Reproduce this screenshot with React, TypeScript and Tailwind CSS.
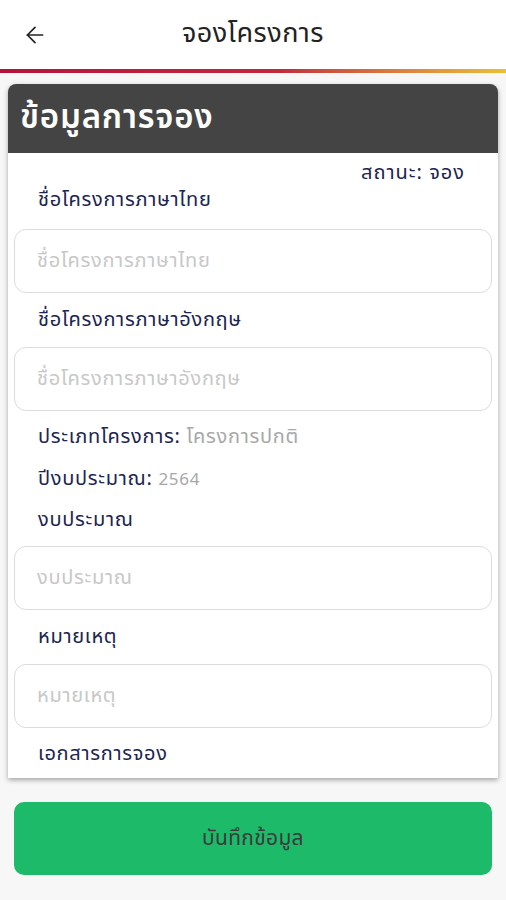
import { ArrowLeft } from "lucide-react"

const font = { fontFamily: '"Noto Sans Thai", "Noto Sans", sans-serif' }

function Label({ text, className = "" }: { text: string; className?: string }) {
  return <div className={"px-[30px] text-[20px] leading-[28px] tracking-[0.7px] text-[#1c2452] " + className}>{text}</div>
}

function Input({ placeholder, className = "" }: { placeholder: string; className?: string }) {
  return (
    <div
      className={
        "mx-[6px] h-[64px] rounded-[12px] border border-[#dcdcdc] flex items-center px-[22px] text-[20px] tracking-[0.7px] text-[#c8c8c8] " +
        className
      }
    >
      {placeholder}
    </div>
  )
}

export default function App() {
  return (
    <div className="w-[506px] h-[900px] bg-[#f7f7f7] flex flex-col overflow-hidden" style={font}>
      {/* top bar */}
      <div className="h-[69px] bg-white relative flex items-center justify-center">
        <ArrowLeft className="absolute left-[22px] top-[22px]" size={26} strokeWidth={1.6} color="#222" />
        <span className="text-[27px] tracking-[0.5px] text-[#222]">จองโครงการ</span>
      </div>
      <div className="h-[4px] bg-gradient-to-r from-[#b5123c] via-[#c0283c] via-55% to-[#eabf35]" />

      <div className="px-[8px] pt-[11px]">
        <div className="rounded-t-[8px] bg-white shadow-[0_2px_5px_rgba(0,0,0,0.35)] overflow-hidden h-[694px]">
          <div className="h-[69px] bg-[#444444] flex items-center px-[12px]">
            <span className="text-[33px] font-semibold tracking-[0.8px] text-white">ข้อมูลการจอง</span>
          </div>
          <div className="flex justify-end pr-[33px] pt-[6px] text-[20px] leading-[28px] tracking-[1px] text-[#1c2452]">สถานะ: จอง</div>
          <Label text="ชื่อโครงการภาษาไทย" className="-mt-[1px]" />
          <Input placeholder="ชื่อโครงการภาษาไทย" className="mt-[15px]" />
          <Label text="ชื่อโครงการภาษาอังกฤษ" className="mt-[13px]" />
          <Input placeholder="ชื่อโครงการภาษาอังกฤษ" className="mt-[13px]" />
          <div className="mt-[12px] px-[30px] text-[20px] leading-[28px] tracking-[0.7px] text-[#1c2452]">
            ประเภทโครงการ: <span className="text-[#a8a8a8]">โครงการปกติ</span>
          </div>
          <div className="mt-[14px] px-[30px] text-[20px] leading-[28px] tracking-[0.7px] text-[#1c2452]">
            ปีงบประมาณ: <span className="text-[#a8a8a8] text-[17px]">2564</span>
          </div>
          <Label text="งบประมาณ" className="mt-[12px]" />
          <Input placeholder="งบประมาณ" className="mt-[12px]" />
          <Label text="หมายเหตุ" className="mt-[13px]" />
          <Input placeholder="หมายเหตุ" className="mt-[13px]" />
          <Label text="เอกสารการจอง" className="mt-[12px]" />
        </div>
      </div>

      <div className="px-[14px] pt-[24px]">
        <button className="w-full h-[73px] rounded-[10px] bg-[#1dba6a] text-[21px] tracking-[0.3px] text-[#3b3b3b]">บันทึกข้อมูล</button>
      </div>
    </div>
  )
}
